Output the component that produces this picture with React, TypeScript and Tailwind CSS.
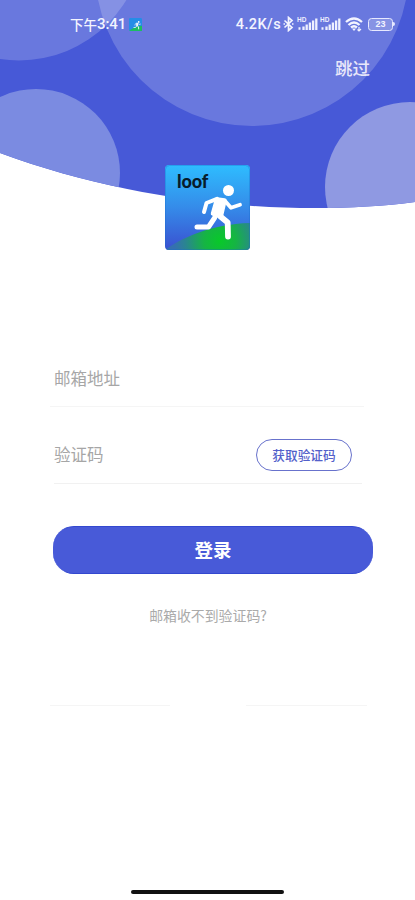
import React from "react";

function Backdrop() {
  return (
    <svg className="absolute inset-x-0 top-0" width="415" height="210" viewBox="0 0 415 210" aria-hidden="true">
      <defs>
        <clipPath id="wave">
          <path d="M0 0H415V202C385 206 350 208 315 208C210 208 100 190 0 153Z" />
        </clipPath>
      </defs>
      <g clipPath="url(#wave)">
        <rect width="415" height="210" fill="#4759d7" />
        <circle cx="19" cy="-65" r="125.5" fill="#fff" fillOpacity=".19" />
        <circle cx="252" cy="-31" r="157" fill="#fff" fillOpacity=".19" />
        <circle cx="36" cy="173" r="84" fill="#7b8be1" />
        <circle cx="410" cy="187" r="85" fill="#8f99e2" />
      </g>
    </svg>
  );
}

function Runner() {
  return (
    <g fill="none" stroke="#fff" strokeLinecap="round" strokeLinejoin="round">
      <circle cx="63.500" cy="25.500" r="5.500" fill="#fff" stroke="none" />
      <path d="M39 47L41.500 38L52 33.800" strokeWidth="4" />
      <path d="M52 34.500L59.500 35.500L56 50.500L48 48.500L51 38Z" fill="#fff" strokeWidth="4.500" />
      <path d="M60.500 36.500L66 42.800L75 39.800" strokeWidth="3.800" />
      <path d="M49.500 53L43.500 62L32 62" strokeWidth="5" />
      <path d="M53 49.500L62.700 57.500L63 71.500" strokeWidth="5.800" />
    </g>
  );
}

function Logo() {
  return (
    <div className="relative h-[85px] w-[85px] overflow-hidden rounded-[4px]">
      <svg width="85" height="85" viewBox="0 0 85 85" aria-hidden="true">
        <defs>
          <linearGradient id="sky" x1="0" y1="0" x2="0" y2="1">
            <stop offset="0" stopColor="#2ebdff" />
            <stop offset=".5" stopColor="#358be9" />
            <stop offset="1" stopColor="#3a50d0" />
          </linearGradient>
          <radialGradient id="hill" gradientUnits="userSpaceOnUse" cx="55" cy="76" r="46">
            <stop offset="0" stopColor="#08c929" />
            <stop offset=".35" stopColor="#16b444" />
            <stop offset=".75" stopColor="#2a8590" />
            <stop offset="1" stopColor="#3570b0" />
          </radialGradient>
        </defs>
        <rect width="85" height="85" fill="url(#sky)" />
        <path d="M0 85C14 74 46 59 85 58V85Z" fill="url(#hill)" />
        <rect x=".5" y=".5" width="84" height="84" rx="4" fill="none" stroke="#166dca" strokeOpacity=".35" />
        <Runner />
      </svg>
      <span className="absolute left-[12px] top-[6px] font-['Lato'] text-[18px] font-black leading-5 tracking-[-0.1px] text-[#071c2b]">loof</span>
    </div>
  );
}

function Signal() {
  return (
    <svg width="21" height="14" viewBox="0 0 21 14" aria-hidden="true">
      <text x="0" y="5.400" fill="#eef0ff" fontSize="6.500" fontWeight="700" fontFamily="Liberation Sans">HD</text>
      <path d="M1.500 11.500h2M6.500 13V9.500M9.700 13V7.500M12.900 13V5.500M16.100 13V3.500M19.300 13V1.500" stroke="#eef0ff" strokeWidth="2.300" />
    </svg>
  );
}

function StatusBar() {
  return (
    <div className="flex h-12 items-center pl-[70px] pr-[20px] text-[#f3f4ff]">
      <span className="flex items-center whitespace-nowrap font-['Noto_Sans_CJK_SC',sans-serif] text-[13.500px] font-medium leading-5">下午<span className="font-['Roboto',sans-serif] text-[15px] tracking-[-0.1px]">3:41</span></span>
      <svg className="ml-[3px] mt-px" width="13" height="13" viewBox="0 0 85 85" aria-hidden="true">
        <rect width="85" height="85" rx="8" fill="#258de7" />
        <path d="M0 85C23 65 52 53 85 50V85Z" fill="#1bbd62" />
        <Runner />
      </svg>
      <div className="ml-auto flex items-center">
        <span className="mt-[2px] font-['Roboto',sans-serif] text-[14.500px] font-medium leading-5 tracking-[0.400px]">4.2K/s</span>
        <svg className="ml-[2px]" width="11" height="16" viewBox="0 0 11 16" fill="none" stroke="currentColor" strokeWidth="1.700" aria-hidden="true">
          <path d="M1.500 4.500L9 11.500L5.500 14.500V1.500L9 4.500L1.500 11.500M.5 8h1.500M9 8h1.500" />
        </svg>
        <div className="ml-[3px] flex gap-[2px]"><Signal /><Signal /></div>
        <svg className="ml-[4px]" width="18" height="15" viewBox="0 0 18 15" fill="none" stroke="currentColor" strokeWidth="2.300" aria-hidden="true">
          <path d="M1 5Q9-2 17 5M3.500 8Q9 3 14.500 8M6 10.500Q9 8 12 10.500" />
          <path d="M7 11.500L9 14L11 11.500Z" fill="currentColor" stroke="none" />
          <path d="M14 10v4m-1.500-1.500L14 14l2-2" strokeWidth="1.200" />
        </svg>
        <div className="ml-[5px] flex h-[13px] w-[25px] items-center justify-center rounded-[3.500px] border-[1.500px] border-[#e7e9ff] bg-white/20 font-['Liberation_Sans'] text-[9px] font-bold leading-none">23</div>
        <div className="h-1 w-[2px] rounded-r bg-[#e7e9ff]" />
      </div>
    </div>
  );
}

export default function App() {
  return (
    <main className="relative h-[900px] w-[415px] overflow-hidden bg-white font-['Noto_Sans_CJK_SC',sans-serif]">
      <Backdrop />
      <div className="relative flex h-full flex-col">
        <StatusBar />
        <div className="flex h-10 items-center justify-end pr-[45px]">
          <button className="text-[17.500px] font-medium leading-6 text-[#e8e7fa]">跳过</button>
        </div>
        <div className="mt-[77px] flex justify-center"><Logo /></div>
        <form className="mt-[105px] flex flex-col">
          <div className="ml-[50px] flex h-[52px] w-[314px] border-b border-[#f5f5f5] pl-1 pt-[11px]">
            <label className="text-[16.500px] leading-6 text-[#a6a6a6]">邮箱地址</label>
          </div>
          <div className="ml-[54px] flex h-[77px] w-[308px] items-start justify-between border-b border-[#f1f1f1] pt-[32px]">
            <label className="mt-[3px] text-[16.500px] leading-6 text-[#a6a6a6]">验证码</label>
            <button type="button" className="mr-[10px] flex h-8 w-[96px] items-center justify-center rounded-full border border-[#6872cc] text-[12.700px] font-medium leading-5 text-[#5360ca]">获取验证码</button>
          </div>
          <button type="button" className="ml-[53px] mt-[42px] flex h-[48px] w-[320px] items-center justify-center rounded-[21px] border-y border-[#3348cf] bg-[#485ad8] pb-[2px] text-[18.500px] font-bold leading-6 text-white">登录</button>
        </form>
        <p className="mt-[31px] pl-[1px] text-center text-[13.900px] leading-5 text-[#aaa]">邮箱收不到验证码?</p>
        <div className="mt-[80px] flex justify-between pl-[50px] pr-[48px]">
          <div className="h-px w-[120px] bg-[#f5f5f5]" />
          <div className="h-px w-[121px] bg-[#f5f5f5]" />
        </div>
        <div className="mb-[6px] ml-[131px] mt-auto h-1 w-[153px] rounded-full bg-[#111]" />
      </div>
    </main>
  );
}
